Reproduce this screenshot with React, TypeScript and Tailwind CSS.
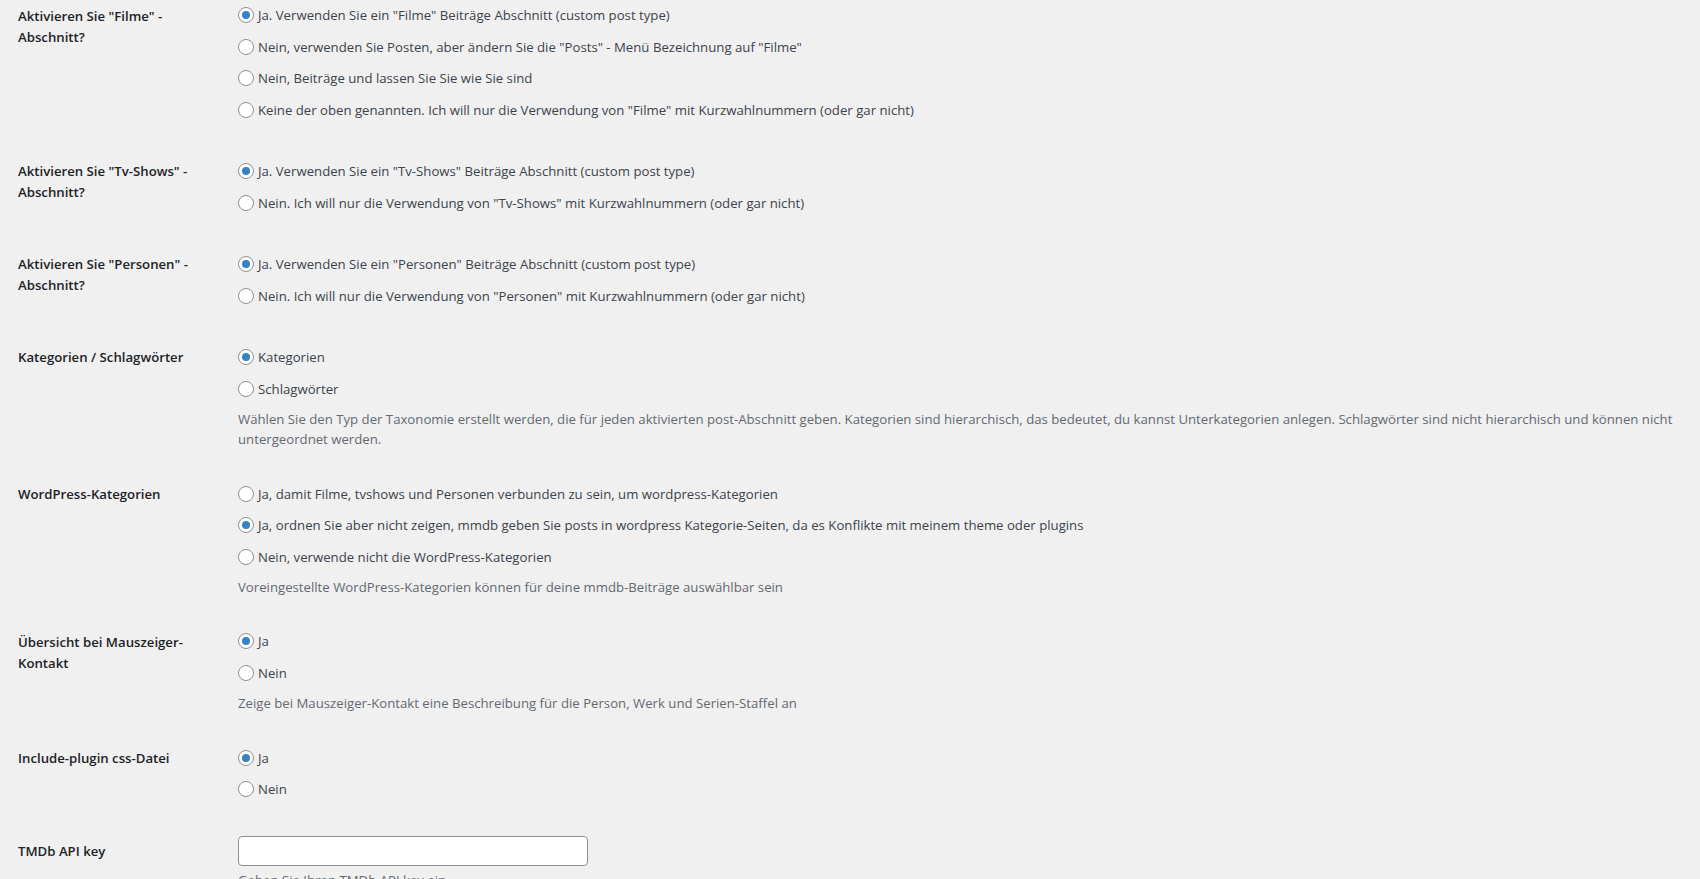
import React from 'react';

type Option = { label: string; checked?: boolean };

type Setting = {
  title: string;
  options?: Option[];
  description?: React.ReactNode;
  input?: boolean;
};

const settings: Setting[] = [
  {
    title: 'Aktivieren Sie "Filme" - Abschnitt?',
    options: [
      { label: 'Ja. Verwenden Sie ein "Filme" Beiträge Abschnitt (custom post type)', checked: true },
      { label: 'Nein, verwenden Sie Posten, aber ändern Sie die "Posts" - Menü Bezeichnung auf "Filme"' },
      { label: 'Nein, Beiträge und lassen Sie Sie wie Sie sind' },
      { label: 'Keine der oben genannten. Ich will nur die Verwendung von "Filme" mit Kurzwahlnummern (oder gar nicht)' },
    ],
  },
  {
    title: 'Aktivieren Sie "Tv-Shows" - Abschnitt?',
    options: [
      { label: 'Ja. Verwenden Sie ein "Tv-Shows" Beiträge Abschnitt (custom post type)', checked: true },
      { label: 'Nein. Ich will nur die Verwendung von "Tv-Shows" mit Kurzwahlnummern (oder gar nicht)' },
    ],
  },
  {
    title: 'Aktivieren Sie "Personen" - Abschnitt?',
    options: [
      { label: 'Ja. Verwenden Sie ein "Personen" Beiträge Abschnitt (custom post type)', checked: true },
      { label: 'Nein. Ich will nur die Verwendung von "Personen" mit Kurzwahlnummern (oder gar nicht)' },
    ],
  },
  {
    title: 'Kategorien / Schlagwörter',
    options: [{ label: 'Kategorien', checked: true }, { label: 'Schlagwörter' }],
    description: (
      <>
        <span className="whitespace-nowrap">
          Wählen Sie den Typ der Taxonomie erstellt werden, die für jeden aktivierten post-Abschnitt geben. Kategorien sind hierarchisch, das bedeutet, du kannst Unterkategorien anlegen. Schlagwörter sind nicht hierarchisch und können nicht
        </span>
        <br />
        untergeordnet werden.
      </>
    ),
  },
  {
    title: 'WordPress-Kategorien',
    options: [
      { label: 'Ja, damit Filme, tvshows und Personen verbunden zu sein, um wordpress-Kategorien' },
      { label: 'Ja, ordnen Sie aber nicht zeigen, mmdb geben Sie posts in wordpress Kategorie-Seiten, da es Konflikte mit meinem theme oder plugins', checked: true },
      { label: 'Nein, verwende nicht die WordPress-Kategorien' },
    ],
    description: 'Voreingestellte WordPress-Kategorien können für deine mmdb-Beiträge auswählbar sein',
  },
  {
    title: 'Übersicht bei Mauszeiger-Kontakt',
    options: [{ label: 'Ja', checked: true }, { label: 'Nein' }],
    description: 'Zeige bei Mauszeiger-Kontakt eine Beschreibung für die Person, Werk und Serien-Staffel an',
  },
  {
    title: 'Include-plugin css-Datei',
    options: [{ label: 'Ja', checked: true }, { label: 'Nein' }],
  },
  {
    title: 'TMDb API key',
    input: true,
    description: 'Geben Sie Ihren TMDb API key ein',
  },
];

const Radio: React.FC<{ checked?: boolean }> = ({ checked }) => (
  <span className="mr-1 flex h-4 w-4 shrink-0 items-center justify-center rounded-full border border-[#8c8f94] bg-white">
    {checked && <span className="h-2 w-2 rounded-full bg-[#3582c4]" />}
  </span>
);

export default function App() {
  return (
    <div
      className="min-h-screen overflow-hidden bg-[#f0f0f1] text-[13.2px] text-[#3c434a]"
      style={{ fontFamily: '"Open Sans", "Noto Sans", sans-serif' }}
    >
      <div className="-mt-[14.5px] ml-[18px] mr-[20px]">
        {settings.map((s) => (
          <div key={s.title} className="flex">
            <div className="w-[210px] shrink-0 py-5 pr-[10px] font-semibold leading-[21px] text-[#1d2327]">
              {s.title}
            </div>
            <div className="min-w-0 flex-1 px-[10px] py-[15px] leading-[18px]">
              {s.options && (
                <div>
                  {s.options.map((o) => (
                    <label key={o.label} className="flex pt-[4.9px] pb-[7px]">
                      <span className="flex h-[19.6px] items-center whitespace-nowrap">
                        <Radio checked={o.checked} />
                        {o.label}
                      </span>
                    </label>
                  ))}
                </div>
              )}
              {s.input && (
                <input
                  type="text"
                  className="block h-[30px] w-[350px] rounded-[4px] border border-[#8c8f94] bg-white px-2 outline-none"
                />
              )}
              {s.description && (
                <p className="mt-[3.5px] leading-[20px] text-[#646970]">{s.description}</p>
              )}
            </div>
          </div>
        ))}
      </div>
    </div>
  );
}
